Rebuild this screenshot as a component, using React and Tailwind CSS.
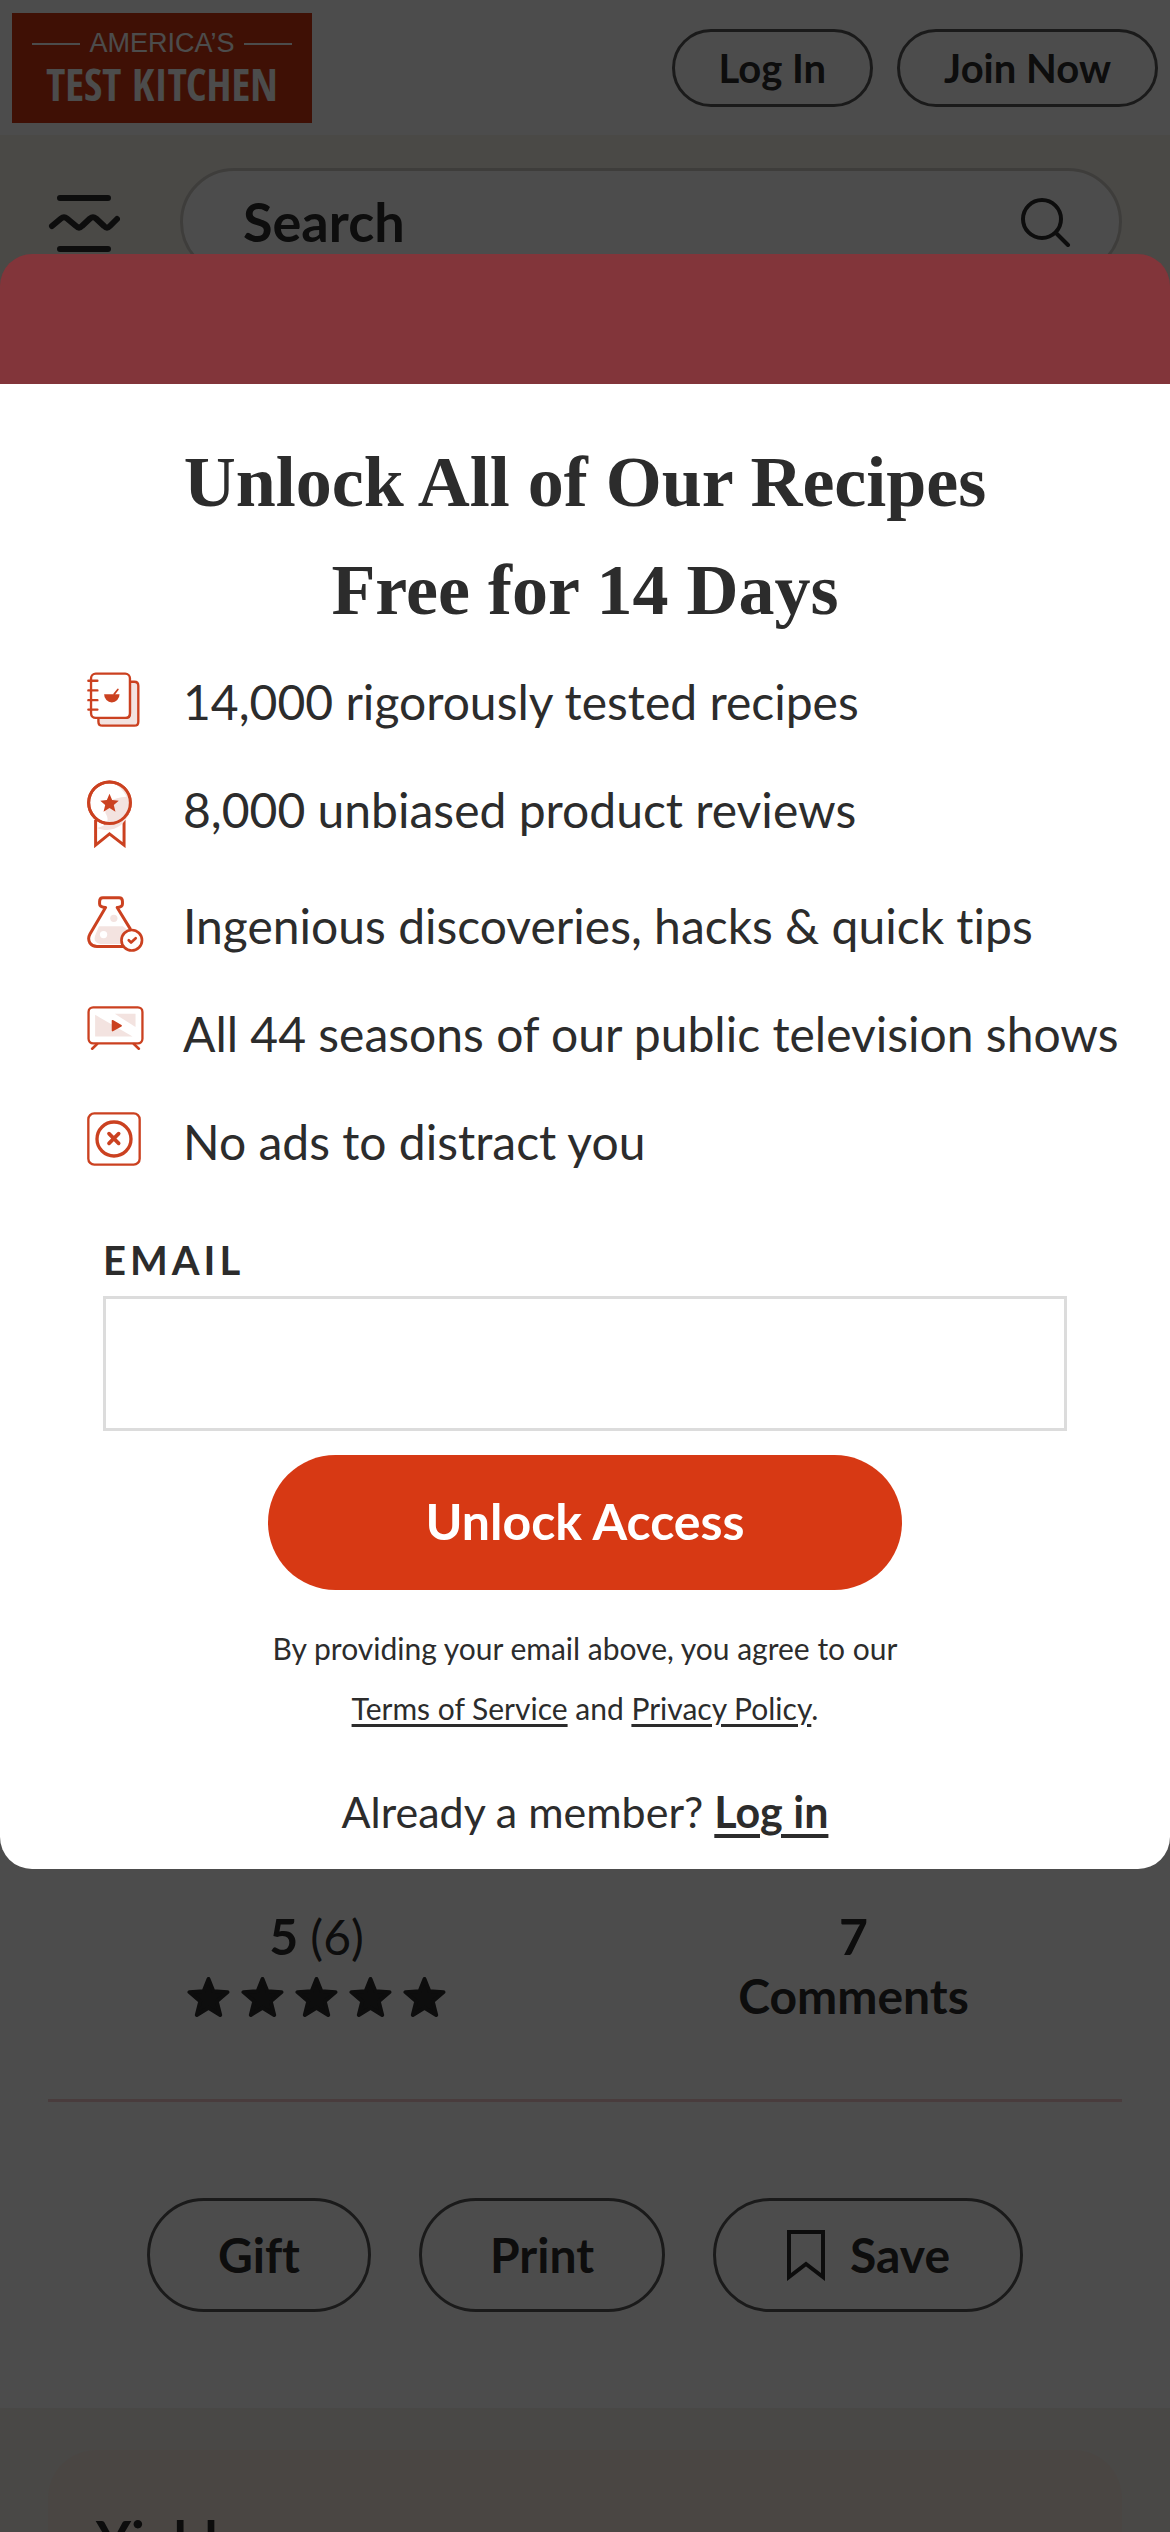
// App.jsx
import React, { useState } from 'react';

const RED = '#cb4120';
const PINK = '#f3e3e0';

function CookbookIcon() {
  return (
    <svg viewBox="0 0 158 164" className="w-[53px] h-[55px]" fill="none" stroke={RED} strokeWidth="7" strokeLinecap="round">
      <path d="M128 29h13q12 0 12 12v107q0 12-12 12H46q-12 0-12-12v-11H116q12 0 12-12z" fill={PINK} />
      <rect x="12" y="5" width="116" height="132" rx="14" fill="#fff" />
      <path d="M4 26h27M4 55h27M4 84h27M4 112h27" />
      <path d="M51 66h46a23 25 0 0 1-46 0z" fill={RED} stroke="none" />
      <path d="M81 66l11-14" strokeWidth="5" />
    </svg>
  );
}

function RibbonIcon() {
  return (
    <svg viewBox="0 0 136 204" className="w-[45px] h-[68px]" fill="none" stroke={RED} strokeWidth="9">
      <path d="M26 120v76l42-34 44 34v-76" />
      <circle cx="68" cy="68" r="63" fill="#fff" />
      <path d="M77 6c45 12 66 56 49 96c-14 36-50 60-96 42c30-6 40-20 26-44c-4-26 14-48 64-50c-10-18-24-34-43-44z" fill={PINK} stroke="none" />
      <circle cx="68" cy="68" r="63" />
      <path d="M68 41l8 19 20 2-15 13 5 20-18-11-18 11 5-20-15-13 20-2z" fill={RED} stroke="none" />
    </svg>
  );
}

function FlaskIcon() {
  return (
    <svg viewBox="0 0 172 168" className="w-[57px] h-[56px]" fill="none" stroke={RED} strokeWidth="9" strokeLinecap="round" strokeLinejoin="round">
      <path d="M36 91h72l14 10-20 43H40q-22-4-16-24z" fill={PINK} stroke="none" />
      <circle cx="81" cy="67" r="11" fill={PINK} stroke="none" />
      <circle cx="50" cy="116" r="11" fill="#fff" stroke="none" />
      <path d="M108 152H30Q16 152 9 142Q1 128 9 114L56 34Q38 34 38 24V16Q38 5 48 5H97Q107 5 107 16V24Q107 34 91 34L130 98" />
      <circle cx="135" cy="133" r="31" fill="#fff" strokeWidth="8" />
      <path d="M126 133l7 7 14-13" strokeWidth="8" />
    </svg>
  );
}

function TvIcon() {
  return (
    <svg viewBox="0 -6 172 140" className="w-[57px] h-[46px]" fill="none" stroke={RED} strokeWidth="7" strokeLinecap="round">
      <path d="M24 27L138 93H24zM84 24h63v40z" fill={PINK} stroke="none" />
      <rect x="4" y="4" width="164" height="110" rx="14" />
      <path d="M30 116l-15 14M142 116l15 14" strokeWidth="8" />
      <path d="M77 45v30l26-15z" fill={RED} strokeLinejoin="round" strokeWidth="5" />
    </svg>
  );
}

function NoAdsIcon() {
  return (
    <svg viewBox="0 0 162 162" className="w-[54px] h-[54px]" fill="none" stroke={RED} strokeLinecap="round">
      <rect x="4" y="4" width="154" height="154" rx="18" strokeWidth="7" />
      <circle cx="81" cy="81" r="51" strokeWidth="10" />
      <path d="M66 65l29 29M95 65l-29 29" strokeWidth="11" />
    </svg>
  );
}

const benefits = [
  { icon: CookbookIcon, text: '14,000 rigorously tested recipes' },
  { icon: RibbonIcon, text: '8,000 unbiased product reviews' },
  { icon: FlaskIcon, text: 'Ingenious discoveries, hacks & quick tips' },
  { icon: TvIcon, text: 'All 44 seasons of our public television shows' },
  { icon: NoAdsIcon, text: 'No ads to distract you' },
];

function Logo() {
  return (
    <a href="#" aria-label="America's Test Kitchen" className="block">
      <svg viewBox="0 0 300 110" className="w-[300px] h-[110px]">
        <rect width="300" height="110" fill="#d33811" />
        <path d="M20 31h48M232 31h48" stroke="#fff" strokeWidth="2" />
        <text x="150" y="39" textAnchor="middle" fill="#fff" fontSize="27" fontFamily="Liberation Sans, sans-serif">AMERICA’S</text>
        <text x="150" y="88" textAnchor="middle" fill="#fff" fontSize="44" fontWeight="700" fontFamily="Open Sans Condensed, sans-serif">TEST KITCHEN</text>
      </svg>
    </a>
  );
}

function Star() {
  return (
    <svg viewBox="0 0 44 43" className="w-[43px] h-[42px]" fill="#2c2c2c" stroke="#2c2c2c" strokeWidth="4" strokeLinejoin="round">
      <path d="M22 3l5 12.500 14.500 1L30.500 26l3.500 14-12-7.500L10 40l3.500-14L2.500 16.500l14.500-1z" />
    </svg>
  );
}

function Header() {
  return (
    <header>
      <div className="h-[135px] px-3 flex items-center justify-between">
        <Logo />
        <div className="flex gap-6">
          <button type="button" className="h-[78px] px-[44px] rounded-full border-3 border-[#595959] text-[40px] leading-none font-bold">Log In</button>
          <button type="button" className="h-[78px] px-[44px] rounded-full border-3 border-[#595959] text-[40px] leading-none font-bold">Join Now</button>
        </div>
      </div>
      <div className="bg-[#f7f3ec] py-[33px] px-12 flex items-center gap-[60px]">
        <button type="button" aria-label="Menu">
          <svg viewBox="0 0 72 60" className="w-[72px] h-[60px]" fill="none" stroke="#2c2c2c" strokeWidth="6" strokeLinecap="round" strokeLinejoin="round">
            <path d="M12 6h48M12 57h48" />
            <path d="M4 34L13 26.500Q16 24 19 26.500L28 34Q31 37 34 34L42 26.500Q45 24 48 26.500L56 34Q59 37 62 34L69 27" />
          </svg>
        </button>
        <label className="flex-1 h-[108px] pl-[60px] pr-[48px] rounded-full border-3 border-[#cfcdc6] bg-white flex items-center">
          <input type="search" placeholder="Search" className="flex-1 min-w-0 text-[54px] leading-[60px] font-bold outline-none placeholder:text-[#2c2c2c]" />
          <svg viewBox="0 0 50 50" className="w-[50px] h-[50px]" fill="none" stroke="#2c2c2c" strokeWidth="4" strokeLinecap="round">
            <circle cx="21" cy="22" r="19" />
            <path d="M35 36l12 12" />
          </svg>
        </label>
      </div>
    </header>
  );
}

function RecipePage() {
  return (
    <div className="bg-white">
      <Header />
      <main>
        <div className="h-[1597px]" />
        <div className="mx-12 pb-[72px] grid grid-cols-2 text-center border-b-3 border-[#f6c9cc]">
          <div>
            <p className="text-[50px] leading-[60px] font-bold">5 <span className="text-[48px] font-normal">(6)</span></p>
            <div className="h-[60px] flex items-center justify-center gap-[11px]">
              {[1, 2, 3, 4, 5].map((n) => <Star key={n} />)}
            </div>
          </div>
          <div>
            <p className="text-[50px] leading-[60px] font-bold">7</p>
            <p className="text-[48px] leading-[60px] font-bold">Comments</p>
          </div>
        </div>
        <div className="pt-24 pb-24 flex justify-center gap-12 text-[48px] leading-none font-bold">
          <button type="button" className="h-[114px] px-[68px] rounded-full border-3 border-[#595959]">Gift</button>
          <button type="button" className="h-[114px] px-[68px] rounded-full border-3 border-[#595959]">Print</button>
          <button type="button" className="h-[114px] px-[70px] rounded-full border-3 border-[#595959] flex items-center gap-6">
            <svg viewBox="0 0 40 52" className="w-[40px] h-[52px]" fill="none" stroke="#2c2c2c" strokeWidth="4">
              <path d="M3 3h34v45L20 35 3 48z" />
            </svg>
            Save
          </button>
        </div>
        <section className="bg-[#f5f1ea] px-12 pt-[42px]">
          <div className="rounded-[48px] bg-[#f7ebe2] px-12 pt-[60px] pb-12">
            <h2 className="text-[54px] leading-[60px] font-bold">Yield</h2>
          </div>
        </section>
      </main>
    </div>
  );
}

function SignupModal() {
  const [email, setEmail] = useState('');

  return (
    <div role="dialog" aria-modal="true" aria-labelledby="signup-title" className="w-full">
      <div className="h-[130px] rounded-t-[32px] bg-[#82353a]" />
      <div className="rounded-b-[32px] bg-white">
        <h1 id="signup-title" className="pt-11 text-center font-['Liberation_Serif',serif] text-[72px] leading-[108px] font-bold">
          Unlock All of Our Recipes<br />Free for 14 Days
        </h1>
        <ul className="mt-7 pl-[87px] flex flex-col gap-12">
          {benefits.map(({ icon: Icon, text }) => (
            <li key={text} className="min-h-[60px] flex items-start">
              <span className="w-24 shrink-0"><Icon /></span>
              <span className="text-[48px] leading-[60px] whitespace-nowrap">{text}</span>
            </li>
          ))}
        </ul>
        <form onSubmit={(e) => e.preventDefault()} className="mt-[64px] px-[103px] flex flex-col">
          <label htmlFor="email" className="mb-3 text-[40px] leading-[48px] font-bold tracking-widest">EMAIL</label>
          <input
            type="email"
            id="email"
            value={email}
            onChange={(e) => setEmail(e.target.value)}
            className="h-[135px] px-6 border-3 border-[#dcdcdc] text-[48px] outline-none"
          />
          <button type="submit" className="mt-6 self-center h-[135px] px-[158px] pb-1 rounded-full bg-[#d73914] text-white text-[50px] leading-none font-bold">Unlock Access</button>
        </form>
        <p className="mt-7 text-center text-[30px] leading-[60px]">
          By providing your email above, you agree to our<br />
          <a href="#" className="underline decoration-3 underline-offset-4">Terms of Service</a> and <a href="#" className="underline decoration-3 underline-offset-4">Privacy Policy</a>.
        </p>
        <p className="mt-11 pb-[27px] text-center text-[43px] leading-[60px]">
          Already a member? <a href="#" className="font-bold underline decoration-4 underline-offset-6">Log in</a>
        </p>
      </div>
    </div>
  );
}

function App() {
  return (
    <div className="relative h-screen overflow-hidden font-[Lato,sans-serif] text-[#2c2c2c] [font-variant-ligatures:none]">
      <RecipePage />
      {/* Modal sits over the dimmed page */}
      <div className="absolute inset-0 pt-[254px] bg-black/70">
        <SignupModal />
      </div>
    </div>
  );
}

export default App;
